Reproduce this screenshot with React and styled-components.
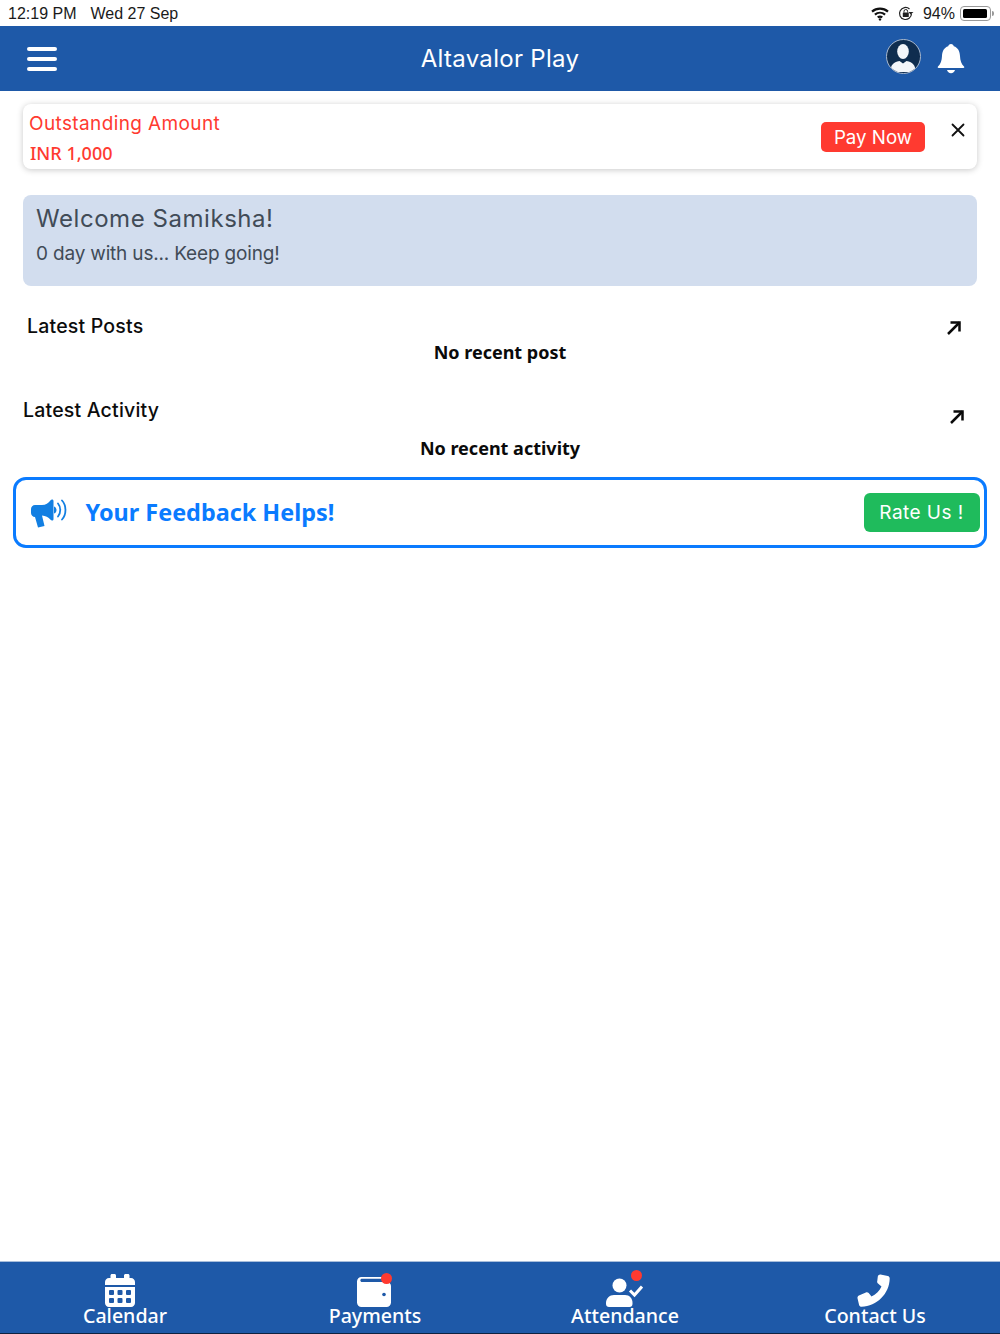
import React from 'react';
import styled, { createGlobalStyle } from 'styled-components';

const Global = createGlobalStyle`
  html, body { margin: 0; padding: 0; background: #fff; }
  * { box-sizing: border-box; }
`;
const geo = `"Inter", "Lato", "Liberation Sans", sans-serif`;
const noto = `"Noto Sans", "Open Sans", sans-serif`;

const Page = styled.div`
  width: 1000px; height: 1334px; display: flex; flex-direction: column; background: #fff; overflow: hidden;
`;
const StatusBar = styled.div`
  height: 26px; display: flex; align-items: center; justify-content: space-between;
  padding: 1px 7px 0 8px; font-family: "Liberation Sans", Arial, sans-serif; font-size: 16px; color: #1a1a1a;
`;
const StatusGroup = styled.div`display: flex; align-items: center; gap: ${p => p.$gap || 14}px;`;
const Battery = styled.div`
  width: 31px; height: 15px; border: 1px solid #999; border-radius: 4px; padding: 2px; margin: 0 2px 0 -4px; position: relative;
  &::before { content: ""; display: block; width: 94%; height: 100%; background: #000; border-radius: 1.5px; }
  &::after { content: ""; position: absolute; right: -4px; top: 4px; width: 2px; height: 5px; background: #999; border-radius: 0 2px 2px 0; }
`;
const Header = styled.header`
  height: 65px; background: #1e59a8; display: flex; align-items: center; position: relative; padding: 0 35px 0 27px; justify-content: space-between;
`;
const Menu = styled.div`
  width: 30px; display: flex; flex-direction: column; gap: 6px;
  span { height: 4px; background: #fff; border-radius: 2px; }
`;
const Title = styled.div`
  position: absolute; left: 0; right: 0; text-align: center; font-family: ${geo}; font-size: 24px; color: #fff; letter-spacing: .3px; pointer-events: none;
`;
const HeaderIcons = styled.div`display: flex; align-items: center; gap: 16px;`;
const Avatar = styled.div`
  width: 35px; height: 35px; margin-top: -5px; border-radius: 50%; border: 1.5px solid #a9b9cf; background: #0f2d4f; overflow: hidden;
  svg { display: block; }
`;
const Content = styled.main`
  padding: 13px 23px 0; display: flex; flex-direction: column; flex: 1;
`;
const Alert = styled.section`
  height: 65px; background: #fff; border-radius: 8px; box-shadow: 0 1px 6px rgba(0,0,0,.22);
  display: flex; align-items: center; justify-content: space-between; padding: 0 11px 0 6px;
`;
const AlertText = styled.div`display: flex; flex-direction: column; gap: 5px; padding-top: 4px; color: #ff3a30;`;
const AlertLabel = styled.div`font-family: ${geo}; font-size: 19px; letter-spacing: .38px; line-height: 24px;`;
const AlertAmount = styled.div`font-family: ${noto}; font-size: 18px; font-weight: 500; line-height: 24px; margin-left: 1px;`;
const AlertActions = styled.div`display: flex; align-items: flex-start; gap: 25px;`;
const PayButton = styled.button`
  width: 104px; height: 30px; margin-top: 1px; border: 0; border-radius: 5px; background: #ff3a30; color: #fff; padding: 0;
  font-family: ${geo}; font-size: 18.7px;
`;
const Close = styled.div`width: 16px; height: 16px; margin-top: 1px;`;
const Welcome = styled.section`
  margin-top: 26px; height: 91px; background: #d2ddee; border-radius: 8px; padding: 9px 13px; color: #414b57; font-family: ${geo};
`;
const WelcomeTitle = styled.div`font-size: 24px; line-height: 30px; letter-spacing: .55px;`;
const WelcomeSub = styled.div`font-size: 19px; line-height: 26px; margin-top: 7px; letter-spacing: -.18px;`;
const SectionHead = styled.div`
  display: flex; align-items: center; justify-content: space-between;
  margin-top: ${p => p.$top}px; padding: 0 ${p => p.$right}px 0 ${p => p.$left}px; height: 28px;
`;
const SectionTitle = styled.h2`margin: 0; font-family: ${geo}; font-size: 19.5px; font-weight: 500; letter-spacing: .2px; color: #0c0c0c;`;
const ArrowBox = styled.div`
  width: 14px; height: 14px; transform: translateY(${p => p.$drop}px);
  svg { display: block; }
`;
const Empty = styled.div`
  margin-top: ${p => p.$top}px; text-align: center; font-family: ${noto}; font-size: 18px; font-weight: 700; color: #0a0a0a; line-height: 24px;
`;
const Feedback = styled.section`
  margin: 17px -10px 0; height: 71px; border: 3px solid #0a7bff; border-radius: 13px; display: flex; align-items: center; justify-content: space-between;
  padding: 0 4.5px 0 14.5px;
`;
const FeedbackLeft = styled.div`display: flex; align-items: center; gap: 19px;`;
const FeedbackText = styled.div`font-family: ${noto}; font-size: 23.4px; font-weight: 700; color: #0a7bff; margin-top: -2px;`;
const RateButton = styled.button`
  width: 116px; height: 39px; border: 0; border-radius: 6px; background: #1fbb5c; color: #fff; padding: 0;
  font-family: ${geo}; font-size: 19px; letter-spacing: .45px;
`;
const BottomBar = styled.nav`
  height: 73px; background: #1e59a8; border-top: 1px solid #a8bedb; border-bottom: 1px solid #0e2240;
  display: grid; grid-template-columns: repeat(4, 1fr); color: #fff;
`;
const NavItem = styled.div`
  display: flex; flex-direction: column; align-items: center; padding-top: 12px; position: relative;
`;
const NavIcon = styled.div`
  height: 33px; display: flex; align-items: flex-end; justify-content: center; position: relative; transform: translateX(${p => p.$shift || 0}px);
  svg { display: block; }
`;
const Dot = styled.span`
  position: absolute; width: 11px; height: 11px; border-radius: 50%; background: #ff3a30; right: ${p => p.$right}px; top: ${p => p.$top}px;
`;
const NavLabel = styled.div`font-family: ${noto}; font-size: 19.6px; font-weight: 500; line-height: 22px; margin-top: -2px;`;

const Wifi = () => (
  <svg width="18" height="14" viewBox="0 0 18 14" fill="none" stroke="#111" strokeWidth="2.2">
    <path d="M1 4.6C5.6.6 12.4.6 17 4.6" />
    <path d="M3.9 7.6c3-2.5 7.2-2.5 10.2 0" />
    <path d="M6.7 10.4c1.4-1 3.2-1 4.6 0" />
    <circle cx="9" cy="12.4" r="1.2" fill="#111" stroke="none" />
  </svg>
);
const RotationLock = () => (
  <svg width="16" height="15" viewBox="0 0 16 15" fill="none">
    <path d="M13.5 7.5a6 6 0 1 1-2-4.5" stroke="#222" strokeWidth="1.2" />
    <path d="M12.5 8.5 15.5 6h-5z" fill="#222" />
    <rect x="4.8" y="6.5" width="6" height="4.5" rx=".6" fill="#222" />
    <path d="M6 6.5V5.3a1.8 1.8 0 0 1 3.6 0v1.2" stroke="#222" strokeWidth="1" />
  </svg>
);
const Bell = () => (
  <svg width="28" height="32" viewBox="0 0 28 32" fill="#fff">
    <path d="M14 1c1.600 0 2.600 1 2.800 2.300C21 4.600 22.800 8.300 23 13c.2 4.800 1.300 8 4 10.500.6.600.3 1.500-.6 1.500H1.600c-.9 0-1.200-.9-.6-1.500C3.700 21 4.800 17.800 5 13c.2-4.700 2-8.400 6.200-9.700C11.400 2 12.400 1 14 1z" />
    <path d="M10 27h8c-.5 2-2 3.200-4 3.200S10.500 29 10 27z" />
  </svg>
);
const Person = () => (
  <svg width="32" height="32" viewBox="0 0 32 32" fill="#f3f6fa">
    <ellipse cx="16" cy="11.500" rx="5.800" ry="7.500" />
    <path d="M3.500 32c0-7 2.500-9.500 9-11l3.500 2.500 3.500-2.500c6.500 1.500 9 4 9 11z" />
  </svg>
);
const CloseIcon = () => (
  <svg width="16" height="16" viewBox="0 0 16 16" stroke="#111" strokeWidth="1.800" strokeLinecap="round"><path d="M2.500 2.500l11 11M13.500 2.500l-11 11" /></svg>
);
const Arrow = () => (
  <svg width="14" height="14" viewBox="0 0 14 14" fill="none" stroke="#0a0a0a" strokeWidth="2.500"><path d="M1 13 12.500 1.500" /><path d="M3.500 1.500h9v9" /></svg>
);
const Megaphone = () => (
  <svg width="36" height="30" viewBox="0 0 36 30" fill="#127fe2">
    <path d="M21 1.500c1 0 1.500.6 1.500 1.500v18c0 1-.6 1.500-1.500 1.500-.5 0-1-.3-1.400-.7-2.300-2.600-5-4-8.600-4.300l2.500 10.500-6.500 1.500-3-10.500H4c-2.200 0-4-1.700-4-4V11c0-2.300 1.800-4 4-4h7c3.800-.2 6.300-1.700 8.600-4.800.4-.4.900-.7 1.400-.7z" />
    <path d="M23 8.500c1.700.6 2.500 2 2.500 3.500s-.8 3-2.500 3.500z" />
    <g fill="none" stroke="#127fe2" strokeWidth="1.800" strokeLinecap="round">
      <path d="M27 5.500c3 3.500 3 9.500 0 13" />
      <path d="M31 2.500c4.600 5 4.600 14 0 19" />
    </g>
  </svg>
);
const Calendar = () => (
  <svg width="30" height="33" viewBox="0 0 30 33">
    <path fill="#fff" d="M7 0h2.500c.8 0 1.500.7 1.500 1.500V4h8V1.500c0-.8.700-1.500 1.500-1.500H23c.8 0 1.500.7 1.500 1.500V4H26c2.200 0 4 1.800 4 4v3H0V8c0-2.200 1.800-4 4-4h1.500V1.500C5.500.7 6.200 0 7 0zM0 13h30v16c0 2.200-1.800 4-4 4H4c-2.200 0-4-1.800-4-4z" />
    <g fill="#1e59a8">
      <rect x="4" y="16" width="5" height="5" rx="1" /><rect x="12.500" y="16" width="5" height="5" rx="1" /><rect x="21" y="16" width="5" height="5" rx="1" />
      <rect x="4" y="24" width="5" height="5" rx="1" /><rect x="12.500" y="24" width="5" height="5" rx="1" /><rect x="21" y="24" width="5" height="5" rx="1" />
    </g>
  </svg>
);
const Wallet = () => (
  <svg width="34" height="30" viewBox="0 0 34 30">
    <path fill="#fff" d="M4.500 0H27c1 0 1.700.7 1.700 1.700H5c-1 0-1.700.7-1.700 1.500S4 5 5 5h25c2.200 0 4 1.800 4 4v16.500c0 2.500-2 4.500-4.500 4.500h-25C2 30 0 28 0 25.500v-21C0 2 2 0 4.500 0z" />
    <circle cx="27" cy="17.500" r="1.800" fill="#1e59a8" />
  </svg>
);
const AttendanceIcon = () => (
  <svg width="37" height="29" viewBox="0 0 37 29" fill="#fff">
    <circle cx="13.500" cy="7.500" r="7" />
    <path d="M8 17h11c4.500 0 7.500 3.500 7.500 8v1c0 1.700-1.300 3-3 3H3c-1.700 0-3-1.300-3-3v-1c0-4.500 3.500-8 8-8z" />
    <path d="M24 12.500l4.500 4.500L36 8.500" fill="none" stroke="#fff" strokeWidth="3" />
  </svg>
);
const Phone = () => (
  <svg width="33" height="33" viewBox="0 0 33 33" fill="#fff">
    <path d="M23.500.5 30.800 2c1.200.3 1.900 1.300 1.900 2.400C32.500 19.500 20 32 4.500 32.800c-1.100 0-2.100-.8-2.400-1.900L.5 24.200c-.2-1.100.3-2.300 1.400-2.800l7-3c1-.4 2.100-.1 2.800.7l2.800 3.400c4.300-2.100 7.900-5.700 10-10.100L21 9.600c-.8-.7-1.100-1.800-.7-2.800l.5-4.300c.3-1.400 1.500-2.200 2.700-2z" />
  </svg>
);

export default function App() {
  return (
    <>
      <Global />
      <Page>
        <StatusBar>
          <StatusGroup><span>12:19 PM</span><span>Wed 27 Sep</span></StatusGroup>
          <StatusGroup $gap={9}><Wifi /><RotationLock /><span>94%</span><Battery /></StatusGroup>
        </StatusBar>
        <Header>
          <Menu><span /><span /><span /></Menu>
          <Title>Altavalor Play</Title>
          <HeaderIcons>
            <Avatar><Person /></Avatar>
            <Bell />
          </HeaderIcons>
        </Header>
        <Content>
          <Alert>
            <AlertText>
              <AlertLabel>Outstanding Amount</AlertLabel>
              <AlertAmount>INR 1,000</AlertAmount>
            </AlertText>
            <AlertActions>
              <PayButton>Pay Now</PayButton>
              <Close><CloseIcon /></Close>
            </AlertActions>
          </Alert>
          <Welcome>
            <WelcomeTitle>Welcome Samiksha!</WelcomeTitle>
            <WelcomeSub>0 day with us... Keep going!</WelcomeSub>
          </Welcome>
          <SectionHead $top={26} $left={4} $right={16}><SectionTitle>Latest Posts</SectionTitle><ArrowBox $drop={2}><Arrow /></ArrowBox></SectionHead>
          <Empty $top={0}>No recent post</Empty>
          <SectionHead $top={32} $left={0} $right={13}><SectionTitle>Latest Activity</SectionTitle><ArrowBox $drop={7}><Arrow /></ArrowBox></SectionHead>
          <Empty $top={12}>No recent activity</Empty>
          <Feedback>
            <FeedbackLeft><Megaphone /><FeedbackText>Your Feedback Helps!</FeedbackText></FeedbackLeft>
            <RateButton>Rate Us !</RateButton>
          </Feedback>
        </Content>
        <BottomBar>
          <NavItem><NavIcon $shift={-5}><Calendar /></NavIcon><NavLabel>Calendar</NavLabel></NavItem>
          <NavItem><NavIcon $shift={-1}><Wallet /><Dot $right={-1} $top={-1} /></NavIcon><NavLabel>Payments</NavLabel></NavItem>
          <NavItem><NavIcon $shift={-1}><AttendanceIcon /><Dot $right={1} $top={-4} /></NavIcon><NavLabel>Attendance</NavLabel></NavItem>
          <NavItem><NavIcon $shift={-2}><Phone /></NavIcon><NavLabel>Contact Us</NavLabel></NavItem>
        </BottomBar>
      </Page>
    </>
  );
}
